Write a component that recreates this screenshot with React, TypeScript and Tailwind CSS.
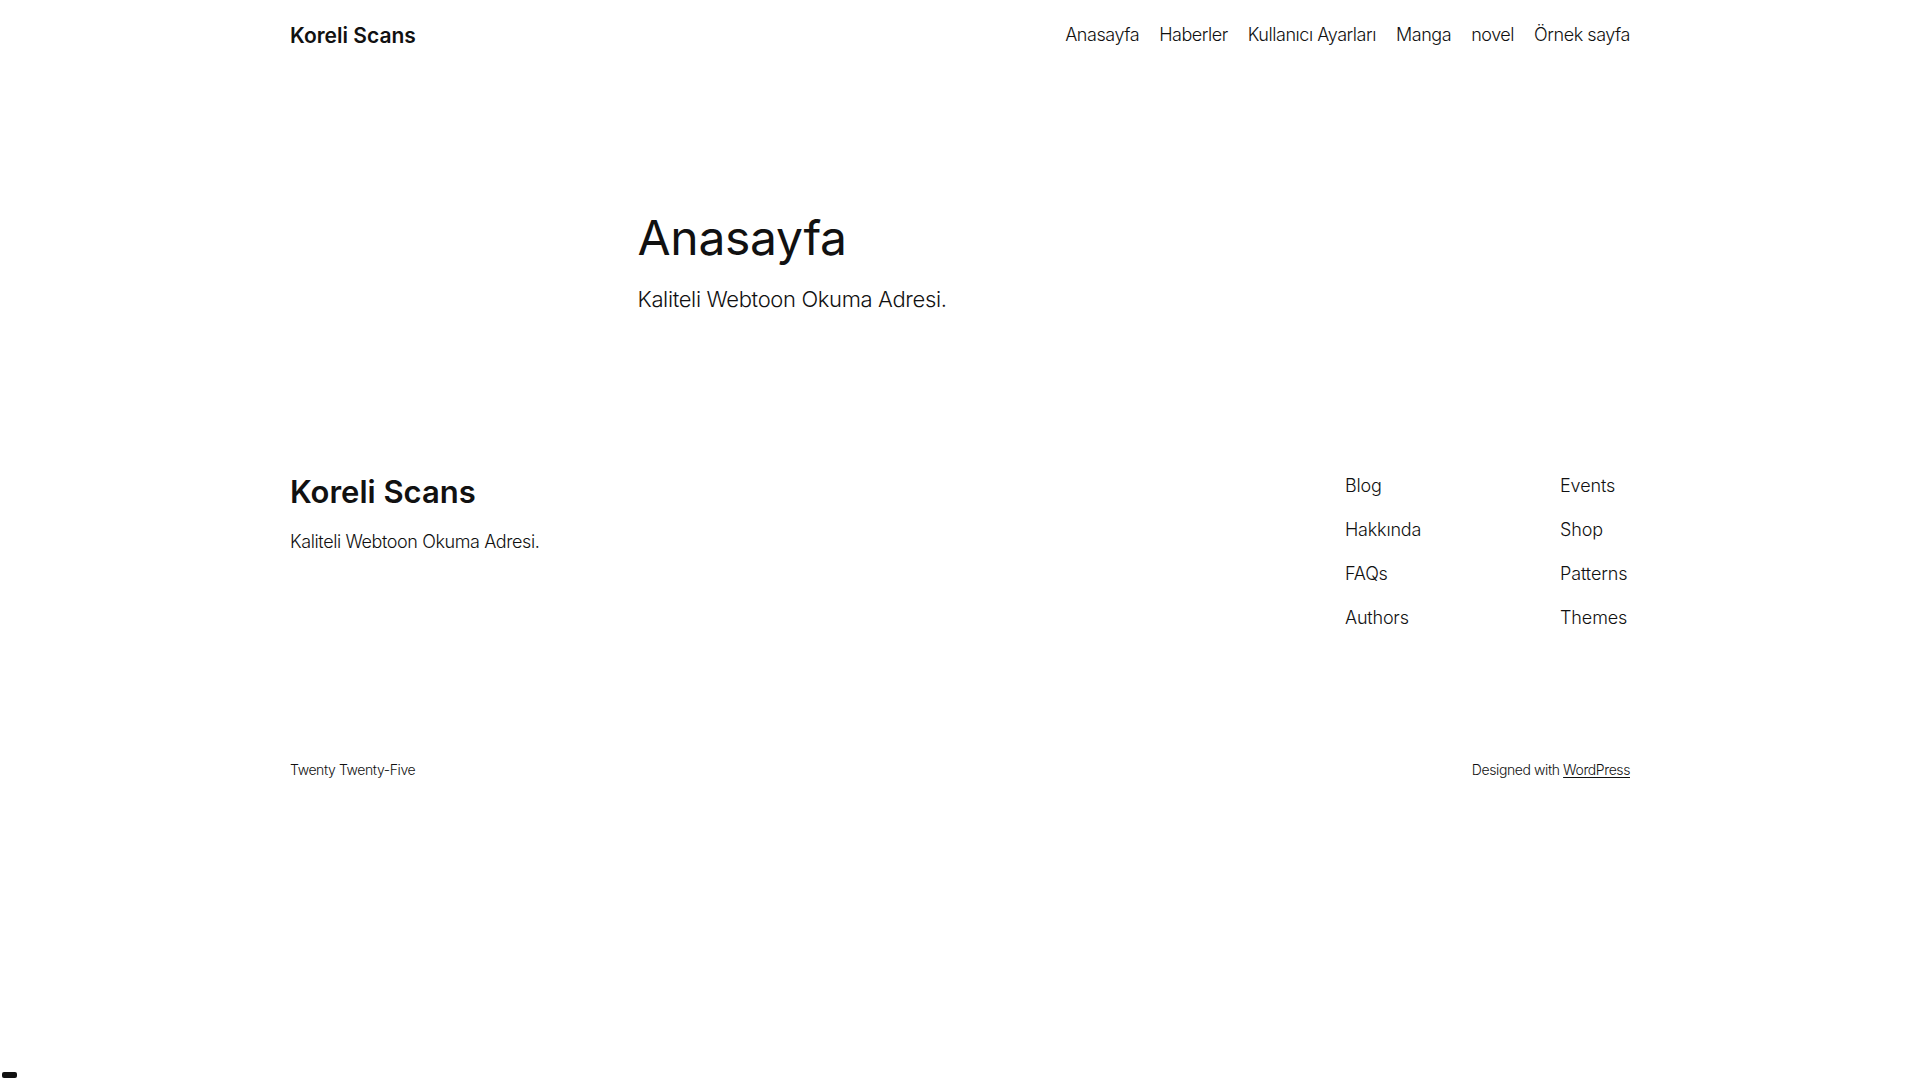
import React from "react";

const font = { fontFamily: "Inter, 'Noto Sans', 'Liberation Sans', sans-serif" };

export default function App() {
  const headerNav = ["Anasayfa", "Haberler", "Kullanıcı Ayarları", "Manga", "novel", "Örnek sayfa"];
  const col1 = ["Blog", "Hakkında", "FAQs", "Authors"];
  const col2 = ["Events", "Shop", "Patterns", "Themes"];
  return (
    <div className="min-h-screen bg-white text-[#111111]" style={font}>
      <header className="mx-auto flex h-[70px] w-[1340px] items-center justify-between">
        <a className="text-[21px] font-semibold leading-none tracking-normal">Koreli Scans</a>
        <nav className="flex items-center gap-[20px]">
          {headerNav.map((n) => (
            <a key={n} className="text-[18px] font-light leading-none tracking-[-0.45px]">
              {n}
            </a>
          ))}
        </nav>
      </header>

      <main className="mx-auto w-[645px] pt-[141px]">
        <h1 className="text-[48px] font-normal leading-[54px] tracking-[-0.3px]">Anasayfa</h1>
        <p className="mt-[19px] text-[22px] font-light leading-[31px] tracking-[-0.35px]">
          Kaliteli Webtoon Okuma Adresi.
        </p>
      </main>

      <footer className="mx-auto mt-[161px] w-[1340px]">
        <div className="flex items-start justify-between">
          <div className="flex flex-col">
            <a className="text-[31px] font-semibold leading-none tracking-normal">Koreli Scans</a>
            <p className="mt-[26px] text-[18px] font-light leading-none tracking-[-0.4px]">
              Kaliteli Webtoon Okuma Adresi.
            </p>
          </div>
          <div className="mt-[1px] grid w-[285px] grid-cols-[215px_1fr]">
            <ul className="flex flex-col gap-[26px]">
              {col1.map((n) => (
                <li key={n} className="text-[18px] font-light leading-none tracking-[-0.2px]">
                  {n}
                </li>
              ))}
            </ul>
            <ul className="flex flex-col gap-[26px]">
              {col2.map((n) => (
                <li key={n} className="text-[18px] font-light leading-none tracking-[-0.1px]">
                  {n}
                </li>
              ))}
            </ul>
          </div>
        </div>
        <div className="mt-[136px] flex items-center justify-between pb-[40px]">
          <p className="text-[14px] font-light leading-none tracking-[-0.4px]">Twenty Twenty-Five</p>
          <p className="text-[14px] font-light leading-none tracking-[-0.4px]">
            Designed with <a className="underline underline-offset-2">WordPress</a>
          </p>
        </div>
      </footer>

      <div className="fixed bottom-[2px] left-[2px] h-[6px] w-[15px] rounded-[2px] bg-[#111111]" />
    </div>
  );
}
